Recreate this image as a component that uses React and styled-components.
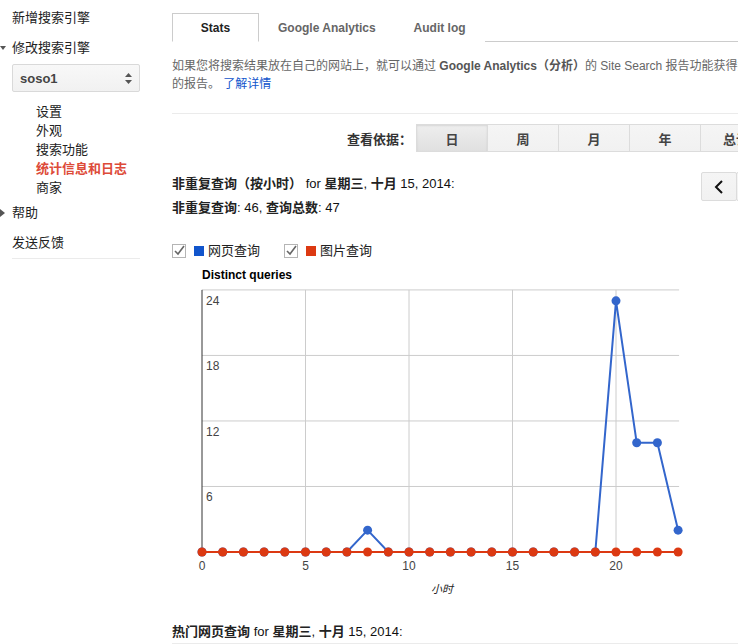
import React from 'react'
import styled, { createGlobalStyle } from 'styled-components'

const GlobalStyle = createGlobalStyle`
  html, body {
    margin: 0;
    overflow: hidden;
    background: #fff;
  }
  body {
    font-family: Arial, "Liberation Sans", "Noto Sans CJK SC", sans-serif;
    font-size: 13px;
    color: #222;
  }
`

const blue = [0,0,0,0,0,0,0,0,2,0,0,0,0,0,0,0,0,0,0,0,23,10,10,2]
const red = new Array(24).fill(0)

const App = () => {
  return (
    <>
      <GlobalStyle />
      <Page>
        <Sidebar>
          <NavItem>新增搜索引擎</NavItem>
          <NavItem arrow="down" gap={10}>修改搜索引擎</NavItem>
          <Select>
            soso1
            <svg width="9" height="13" viewBox="0 0 9 13">
              <path d="M4.5 1 L8 5 H1 Z" fill="#555" />
              <path d="M4.5 12 L8 8 H1 Z" fill="#555" />
            </svg>
          </Select>
          <SubList>
            <SubItem>设置</SubItem>
            <SubItem>外观</SubItem>
            <SubItem>搜索功能</SubItem>
            <SubItem active>统计信息和日志</SubItem>
            <SubItem>商家</SubItem>
          </SubList>
          <NavItem arrow="right" gap={6}>帮助</NavItem>
          <NavItem gap={10}>发送反馈</NavItem>
          <Divider />
        </Sidebar>

        <Main>
          <TabStrip>
            <Tab active>Stats</Tab>
            <Tab>Google Analytics</Tab>
            <Tab>Audit log</Tab>
          </TabStrip>

          <Intro>
            如果您将搜索结果放在自己的网站上，就可以通过 <b>Google Analytics（分析）</b>的 Site Search 报告功能获得搜索<br />
            的报告。 <Link href="#">了解详情</Link>
          </Intro>
          <Rule />

          <ViewBy>
            <ViewLabel>查看依据：</ViewLabel>
            <Segments>
              <Segment active>日</Segment>
              <Segment>周</Segment>
              <Segment>月</Segment>
              <Segment>年</Segment>
              <Segment>总计</Segment>
            </Segments>
          </ViewBy>

          <SummaryRow>
            <Summary>
              <div>非重复查询（按小时） <Latin>for</Latin> 星期三<Latin>,</Latin> 十月 <Latin>15, 2014:</Latin></div>
              <div>非重复查询<Latin>: 46,</Latin> 查询总数<Latin>: 47</Latin></div>
            </Summary>
            <Pager>
              <PageButton>
                <svg width="10" height="14" viewBox="0 0 10 14">
                  <path d="M8 1 L2 7 L8 13" stroke="#111" strokeWidth="2" fill="none" />
                </svg>
              </PageButton>
              <PageButton>
                <svg width="10" height="14" viewBox="0 0 10 14">
                  <path d="M2 1 L8 7 L2 13" stroke="#111" strokeWidth="2" fill="none" />
                </svg>
              </PageButton>
            </Pager>
          </SummaryRow>

          <Legend>
            <LegendItem>
              <CheckIcon />
              <Swatch color="#1155cc" />
              网页查询
            </LegendItem>
            <LegendItem>
              <CheckIcon />
              <Swatch color="#dc3912" />
              图片查询
            </LegendItem>
          </Legend>

          <Chart />

          <BottomHeading>
            热门网页查询 <Latin>for</Latin> 星期三<Latin>,</Latin> 十月 <Latin>15, 2014:</Latin>
          </BottomHeading>
        </Main>
      </Page>
    </>
  )
}

export default App

const CheckIcon = () => (
  <svg width="14" height="14" viewBox="0 0 14 14">
    <rect x="0.5" y="0.5" width="13" height="13" fill="#fff" stroke="#b5b5b5" />
    <path d="M3 7 L6 10 L12 2" stroke="#666" strokeWidth="1.6" fill="none" />
  </svg>
)

const Chart = () => {
  const x = (h) => 30 + h * 20.7
  const y = (v) => 290 - v * 10.92
  const line = (d) => d.map((v, i) => `${i ? 'L' : 'M'}${x(i)} ${y(v)}`).join(' ')
  return (
    <ChartSvg width="600" height="340" viewBox="0 0 600 340">
      <text x="30" y="17" fontSize="12" fontWeight="bold" fill="#000">Distinct queries</text>
      {[24, 18, 12, 6].map((v) => (
        <line key={v} x1={x(0)} x2={x(23) + 1} y1={y(v)} y2={y(v)} stroke="#ccc" />
      ))}
      {[5, 10, 15, 20].map((h) => (
        <line key={h} x1={x(h)} x2={x(h)} y1={y(24)} y2={y(0)} stroke="#ccc" />
      ))}
      <line x1={x(0)} x2={x(0)} y1={y(24)} y2={y(0)} stroke="#333" />
      {[24, 18, 12, 6].map((v) => (
        <text key={v} x="34" y={y(v) + 15} fontSize="12" fill="#444">{v}</text>
      ))}
      {[0, 5, 10, 15, 20].map((h) => (
        <text key={h} x={x(h)} y="308" fontSize="12" fill="#444" textAnchor="middle">{h}</text>
      ))}
      <text x="270" y="331" fontSize="11" fontStyle="italic" fill="#222" textAnchor="middle">小时</text>

      <path d={line(blue)} stroke="#3366cc" strokeWidth="2" fill="none" />
      {blue.map((v, i) => (
        <circle key={i} cx={x(i)} cy={y(v)} r="4.5" fill="#3366cc" />
      ))}
      <path d={line(red)} stroke="#dc3912" strokeWidth="2" fill="none" />
      {red.map((v, i) => (
        <circle key={i} cx={x(i)} cy={y(v)} r="4.5" fill="#dc3912" />
      ))}
    </ChartSvg>
  )
}

const Page = styled.div`
  display: flex;
  align-items: flex-start;
`

const Sidebar = styled.div`
  width: 128px;
  margin-left: 12px;
  padding-top: 8px;
  flex-shrink: 0;
`

const NavItem = styled.div`
  position: relative;
  line-height: 20px;
  margin-top: ${(p) => p.gap || 0}px;
  color: #222;

  &::before {
    content: '';
    position: absolute;
    left: -12px;
    top: ${(p) => (p.arrow === 'down' ? '8px' : '6px')};
    display: ${(p) => (p.arrow ? 'block' : 'none')};
    border-style: solid;
    border-color: transparent;
    ${(p) =>
      p.arrow === 'down'
        ? 'border-width: 4px 3.5px 0 3.5px; border-top-color: #555;'
        : 'border-width: 4px 0 4px 5px; border-left-color: #555;'}
  }
`

const Select = styled.div`
  margin-top: 6px;
  height: 28px;
  box-sizing: border-box;
  border: 1px solid #d9d9d9;
  border-radius: 2px;
  background: linear-gradient(#f8f8f8, #f1f1f1);
  display: flex;
  align-items: center;
  justify-content: space-between;
  padding: 0 6px 0 7px;
  font-weight: bold;
  color: #444;
`

const SubList = styled.div`
  margin-top: 10px;
  padding-left: 24px;
`

const SubItem = styled.div`
  line-height: 19px;
  color: ${(p) => (p.active ? '#dd4b39' : '#222')};
  font-weight: ${(p) => (p.active ? 'bold' : 'normal')};
`

const Divider = styled.div`
  margin-top: 5px;
  height: 1px;
  background: #ebebeb;
`

const Main = styled.div`
  margin-left: 32px;
  width: 600px;
  flex-shrink: 0;
`

const TabStrip = styled.div`
  display: flex;
  padding-top: 13px;
  border-bottom: 1px solid #ccc;
`

const Tab = styled.div`
  min-width: 87px;
  height: 29px;
  box-sizing: border-box;
  padding: 0 18px;
  margin-bottom: -1px;
  display: flex;
  align-items: center;
  justify-content: center;
  font-size: 12px;
  font-weight: bold;
  color: ${(p) => (p.active ? '#222' : '#666')};
  border: 1px solid ${(p) => (p.active ? '#ccc' : 'transparent')};
  border-bottom-color: ${(p) => (p.active ? '#fff' : 'transparent')};
  background: #fff;
`

const Intro = styled.p`
  margin: 15px 0 0;
  font-size: 12px;
  line-height: 18px;
  color: #666;
  white-space: nowrap;

  b {
    color: #555;
  }
`

const Link = styled.a`
  color: #15c;
  text-decoration: none;
`

const Rule = styled.div`
  margin-top: 20px;
  height: 1px;
  background: #ebebeb;
`

const ViewBy = styled.div`
  margin-top: 10px;
  display: flex;
  align-items: center;
  justify-content: flex-end;
  gap: 5px;
`

const ViewLabel = styled.span`
  font-weight: bold;
  color: #333;
`

const Segments = styled.div`
  display: flex;
`

const Segment = styled.div`
  width: 72px;
  height: 28px;
  box-sizing: border-box;
  display: flex;
  align-items: center;
  justify-content: center;
  font-weight: bold;
  color: #444;
  border: 1px solid #dcdcdc;
  margin-left: -1px;
  background: ${(p) => (p.active ? 'linear-gradient(#eee, #e0e0e0)' : 'linear-gradient(#f5f5f5, #f1f1f1)')};
  box-shadow: ${(p) => (p.active ? 'inset 0 1px 2px rgba(0,0,0,0.1)' : 'none')};
`

const SummaryRow = styled.div`
  margin-top: 20px;
  display: flex;
  justify-content: space-between;
  align-items: flex-start;
`

const Summary = styled.div`
  line-height: 24px;
  font-weight: bold;
  color: #222;
`

const Latin = styled.span`
  font-weight: normal;
  color: #111;
`

const Pager = styled.div`
  display: flex;
`

const PageButton = styled.div`
  width: 36px;
  height: 29px;
  box-sizing: border-box;
  border: 1px solid #dcdcdc;
  margin-left: -1px;
  border-radius: 2px;
  background: linear-gradient(#f5f5f5, #f1f1f1);
  display: flex;
  align-items: center;
  justify-content: center;
`

const Legend = styled.div`
  margin-top: 22px;
  display: flex;
  gap: 24px;
  line-height: 18px;
`

const LegendItem = styled.div`
  display: flex;
  align-items: center;
  color: #222;

  svg {
    margin-right: 8px;
  }
`

const Swatch = styled.span`
  width: 10px;
  height: 10px;
  background: ${(p) => p.color};
  margin-right: 4px;
`

const ChartSvg = styled.svg`
  display: block;
  margin-top: 2px;
  font-family: Arial, "Liberation Sans", "Noto Sans CJK SC", sans-serif;
`

const BottomHeading = styled.div`
  margin-top: 21px;
  font-weight: bold;
  line-height: 18px;
  padding-bottom: 2px;
  border-bottom: 1px solid #ebebeb;
`
